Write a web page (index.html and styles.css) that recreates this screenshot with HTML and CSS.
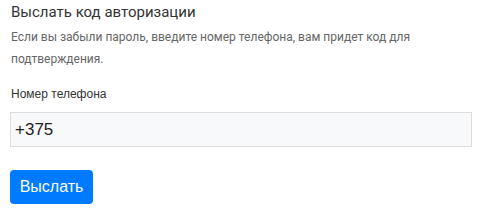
FILE: index.html
```html
<!DOCTYPE html>
<html lang="ru">
  <head>
    <meta charset="UTF-8" />
    <meta name="viewport" content="width=device-width, initial-scale=1.0" />
    <title>Выслать код авторизации</title>
    <link rel="stylesheet" href="styles.css">
  </head>
  <body>
    <form class="restore">
      <h2 class="restore-title">Выслать код авторизации</h2>
      <p class="restore-text">
        Если вы забыли пароль, введите номер телефона, вам придет код для
        подтверждения.
      </p>
      <label class="field-label" for="phone">Номер телефона</label>
      <input id="phone" class="field-input" type="text" value="+375" />
      <button type="button" class="btn-send">Выслать</button>
    </form>
  </body>
</html>
```

FILE: styles.css
```css
* {
  box-sizing: border-box;
}

body {
  margin: 0;
  background: #fff;
}

.restore {
  display: flex;
  flex-direction: column;
  align-items: flex-start;
  padding: 0 10px;
  width: 482px;
}

.restore-title {
  margin: 2px 0 0 1px;
  font-family: Roboto, sans-serif;
  font-weight: 400;
  font-size: 15px;
  line-height: 20px;
  color: #333;
}

.restore-text {
  margin: 4px 0 0 1px;
  font-family: Roboto, sans-serif;
  font-size: 12px;
  line-height: 22px;
  color: #666;
}

.field-label {
  margin: 16px 0 0 1px;
  font-family: "Liberation Sans", Arial, sans-serif;
  font-size: 12px;
  line-height: 16px;
  color: #333;
}

.field-input {
  margin-top: 10px;
  width: 462px;
  height: 35px;
  padding: 0 4px;
  border: 1px solid #ddd;
  background: #f8f9fa;
  font-family: "Liberation Sans", Arial, sans-serif;
  font-size: 17px;
  color: #222;
  outline: none;
}

.btn-send {
  margin-top: 23px;
  width: 83px;
  height: 34px;
  padding: 0;
  border: 0;
  border-radius: 4px;
  background: #007bff;
  color: #fff;
  font-family: "Liberation Sans", Arial, sans-serif;
  font-size: 16px;
}
```
